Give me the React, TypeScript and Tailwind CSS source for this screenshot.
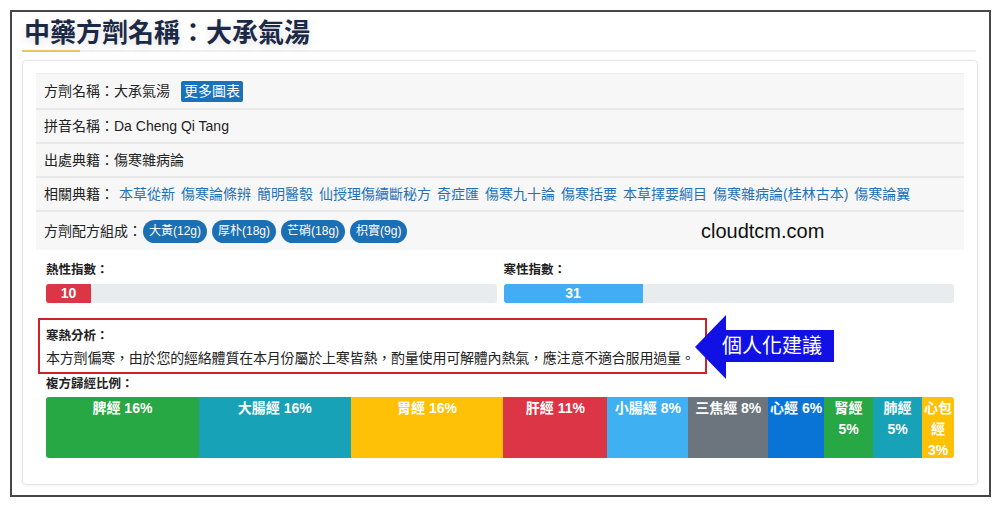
import React from "react";

const links = [
  "本草從新",
  "傷寒論條辨",
  "簡明醫彀",
  "仙授理傷續斷秘方",
  "奇症匯",
  "傷寒九十論",
  "傷寒括要",
  "本草擇要綱目",
  "傷寒雜病論(桂林古本)",
  "傷寒論翼",
];

const pills = ["大黃(12g)", "厚朴(18g)", "芒硝(18g)", "枳實(9g)"];

const segs: { label: string; w: number; bg: string }[] = [
  { label: "脾經 16%", w: 153, bg: "bg-[#28a745]" },
  { label: "大腸經 16%", w: 152, bg: "bg-[#17a2b8]" },
  { label: "胃經 16%", w: 153, bg: "bg-[#ffc107]" },
  { label: "肝經 11%", w: 104, bg: "bg-[#dc3545]" },
  { label: "小腸經 8%", w: 81, bg: "bg-[#3fb0f2]" },
  { label: "三焦經 8%", w: 80, bg: "bg-[#6c757d]" },
  { label: "心經 6%", w: 56, bg: "bg-[#0a74d6]" },
  { label: "腎經 5%", w: 49, bg: "bg-[#28a745]" },
  { label: "肺經 5%", w: 49, bg: "bg-[#17a2b8]" },
  { label: "心包經 3%", w: 32, bg: "bg-[#ffc107]" },
];

export default function App() {
  return (
    <div
      className="w-[1000px] h-[505px] bg-white pt-[10px] pl-[10px]"
      style={{ fontFamily: '"Liberation Sans", "Noto Sans CJK TC", sans-serif' }}
    >
      <div className="w-[981px] h-[487px] border-2 border-[#474747] px-[10px]">
        {/* Title */}
        <div className="relative pt-[4px] border-b-2 border-[#f0f0f0] mr-[3px]">
          <h1 className="pl-[2px] text-[26px] leading-[34px] font-bold text-[#1b2946] [text-shadow:0_3px_8px_rgba(0,0,0,0.12)]">
            中藥方劑名稱：大承氣湯
          </h1>
          <div className="absolute left-0 bottom-[-2px] w-[58px] h-[2px] bg-[#e9c46a]" />
        </div>

        {/* Card */}
        <div className="mt-[8px] w-[956px] h-[425px] border border-[#e4e4e4] rounded-[4px] shadow-[0_1px_3px_rgba(0,0,0,0.06)] pt-[12px] px-[13px]">
          {/* Info table */}
          <div className="text-[14px] text-[#222]">
            <div className="h-[35px] flex items-center px-[8px] bg-[#f7f7f7] border-t border-[#ececec]">
              <span>方劑名稱：大承氣湯</span>
              <span className="ml-[11px] bg-[#1c72ba] text-white px-[3px] leading-[21px] rounded-[2px]">
                更多圖表
              </span>
            </div>
            <div className="h-[34px] flex items-center px-[8px] bg-[#f7f7f7] border-t-2 border-[#e9e9e9]">
              拼音名稱：Da Cheng Qi Tang
            </div>
            <div className="h-[34px] flex items-center px-[8px] bg-[#f7f7f7] border-t-2 border-[#e9e9e9]">
              出處典籍：傷寒雜病論
            </div>
            <div className="h-[34px] flex items-center px-[8px] bg-[#f7f7f7] border-t-2 border-[#e9e9e9] whitespace-nowrap">
              <span>相關典籍：</span>
              <span className="ml-[5px] flex gap-[6px]">
                {links.map((l) => (
                  <a key={l} className="text-[#1f72b8]">
                    {l}
                  </a>
                ))}
              </span>
            </div>
            <div className="relative h-[40px] flex items-center px-[8px] bg-[#f7f7f7] border-t-2 border-[#e9e9e9]">
              <span>方劑配方組成：</span>
              <span className="flex gap-[5px] ml-[1px]">
                {pills.map((p) => (
                  <span
                    key={p}
                    className="bg-[#1b6fb3] text-white text-[12px] leading-[23px] px-[6px] rounded-full"
                  >
                    {p}
                  </span>
                ))}
              </span>
              <span className="absolute left-[665px] top-[6px] text-[20px] leading-[26px] text-[#111]">
                cloudtcm.com
              </span>
            </div>
          </div>

          {/* Stats */}
          <div className="px-[10px]">
            <div className="mt-[11px] flex gap-[7px]">
              <div className="w-[451px]">
                <div className="text-[12.5px] leading-[18px] font-bold text-[#222]">熱性指數：</div>
                <div className="mt-[5px] h-[19px] bg-[#e9ecef] rounded-[3px] overflow-hidden flex">
                  <div className="w-[45px] bg-[#dc3545] text-white text-[14px] font-bold leading-[19px] text-center">
                    10
                  </div>
                </div>
              </div>
              <div className="w-[451px]">
                <div className="text-[12.5px] leading-[18px] font-bold text-[#222]">寒性指數：</div>
                <div className="mt-[5px] h-[19px] bg-[#e9ecef] rounded-[3px] overflow-hidden flex">
                  <div className="w-[139px] bg-[#42adf4] text-white text-[14px] font-bold leading-[19px] text-center">
                    31
                  </div>
                </div>
              </div>
            </div>

            <div className="relative mt-[15px] ml-[-8px] w-[669px] border-2 border-[#cc2229] px-[6px] pt-[7px] pb-[1px]">
              <div className="text-[12.5px] leading-[18px] font-bold text-[#222]">寒熱分析：</div>
              <div className="text-[14px] leading-[26px] text-[#222] whitespace-nowrap tracking-[-0.2px]">
                本方劑偏寒，由於您的經絡體質在本月份屬於上寒皆熱，酌量使用可解體內熱氣，應注意不適合服用過量。
              </div>
              <div className="absolute left-[655px] top-[-5px] w-[139px] h-[64px]">
                <svg width="139" height="64" viewBox="0 0 139 64" className="absolute inset-0">
                  <polygon points="0,32 31,0 31,15 139,15 139,47 31,47 31,64" fill="#1111e6" />
                </svg>
                <span className="absolute left-[27px] top-[16px] text-[20px] leading-[30px] text-white whitespace-nowrap">
                  個人化建議
                </span>
              </div>
            </div>

            <div className="text-[12.5px] leading-[18px] font-bold text-[#222] mt-[1px]">複方歸經比例：</div>
            <div className="mt-[4px] h-[61px] flex rounded-[3px] overflow-hidden">
              {segs.map((s) => (
                <div
                  key={s.label}
                  className={`${s.bg} text-white text-[14px] font-bold leading-[21px] text-center pt-[1px] break-all`}
                  style={{ width: s.w }}
                >
                  {s.label}
                </div>
              ))}
            </div>
          </div>
        </div>
      </div>
    </div>
  );
}
